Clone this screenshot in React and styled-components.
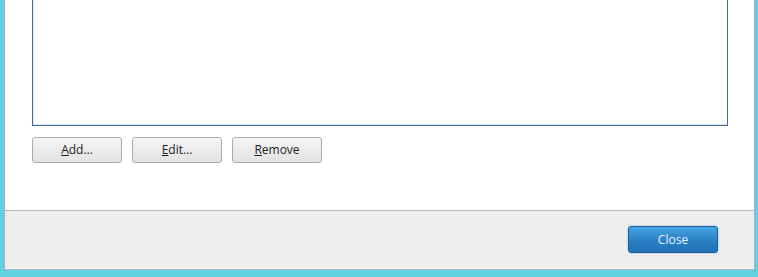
import React from "react";
import styled, { createGlobalStyle } from "styled-components";

const GlobalStyle = createGlobalStyle`
  html, body {
    margin: 0;
    padding: 0;
    background: #62d0e0;
    height: 100%;
    overflow: hidden;
  }
`;

const Window = styled.div`
  display: flex;
  flex-direction: column;
  width: 749px;
  height: 269px;
  margin-left: 4px;
  background: #ffffff;
  border: 1px solid #9fb4bd;
  border-top: none;
  font-family: "Open Sans", "Noto Sans", "DejaVu Sans", sans-serif;
  font-size: 12px;
`;

const Body = styled.div`
  display: flex;
  flex-direction: column;
  gap: 11px;
  height: 210px;
  padding: 0 26px 0 27px;
`;

const ListBox = styled.div`
  height: 125px;
  background: #ffffff;
  border: 1px solid #3f6ca4;
  border-top: none;
  box-shadow: inset 0 -1px 0 #dbe6f1, inset 1px 0 0 #e2eaf2;
`;

const ButtonRow = styled.div`
  display: flex;
  gap: 10px;
`;

const Button = styled.button`
  width: 90px;
  height: 26px;
  padding: 0;
  border: 1px solid #acacac;
  border-radius: 3px;
  background: linear-gradient(#f4f4f4, #e3e3e3);
  color: #1e1e1e;
  font-family: inherit;
  font-size: 12px;
  line-height: 24px;
`;

const Key = styled.span`
  text-decoration: underline;
`;

const Footer = styled.div`
  display: flex;
  justify-content: flex-end;
  height: 58px;
  padding: 15px 36px 0 0;
  box-sizing: border-box;
  background: #eeeeee;
  border-top: 1px solid #b9b9bd;
`;

const PrimaryButton = styled(Button)`
  height: 27px;
  border-color: #1a5c93;
  background: linear-gradient(#45a6e2, #2a7fc4 55%, #1f73b7);
  color: #e9f3fb;
  box-shadow: 0 0 2px rgba(60, 130, 200, 0.5);
`;

export default function App() {
  return (
    <>
      <GlobalStyle />
      <Window>
        <Body>
          <ListBox />
          <ButtonRow>
            <Button>
              <Key>A</Key>dd…
            </Button>
            <Button>
              <Key>E</Key>dit…
            </Button>
            <Button>
              <Key>R</Key>emove
            </Button>
          </ButtonRow>
        </Body>
        <Footer>
          <PrimaryButton>Close</PrimaryButton>
        </Footer>
      </Window>
    </>
  );
}
